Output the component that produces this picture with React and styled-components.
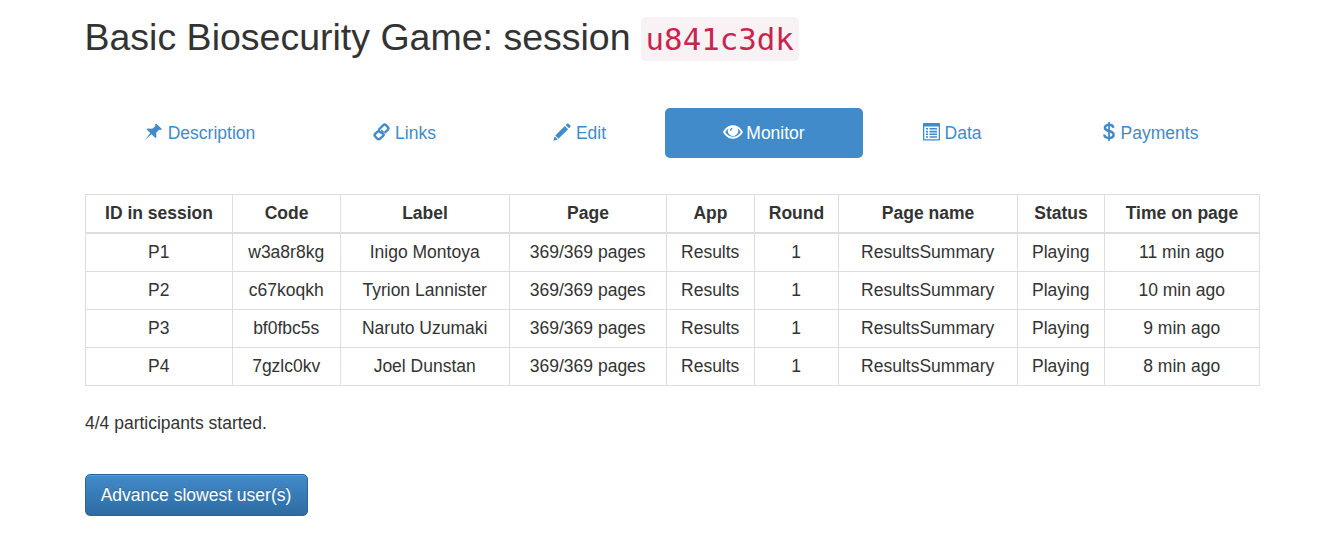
import React from "react";
import styled, { createGlobalStyle } from "styled-components";

const GlobalStyle = createGlobalStyle`
  *, *::before, *::after { box-sizing: border-box; }
  body {
    margin: 0;
    background: #fff;
    color: #333;
    font-family: "Liberation Sans", Arial, sans-serif;
    font-size: 17.5px;
    line-height: 25px;
  }
`;

const Page = styled.main`
  width: 1174px;
  margin-left: 85px;
  padding-top: 17px;
`;

const Title = styled.h2`
  display: flex;
  align-items: center;
  gap: 10px;
  height: 44px;
  margin: 0;
  font-size: 37.5px;
  font-weight: 500;
  line-height: 41px;
  white-space: nowrap;
`;

const TitleText = styled.span`
  height: 41px;
  margin-top: -4px;
  margin-left: -0.5px;
`;

const SessionCode = styled.code`
  height: 44px;
  padding: 0 5px;
  border-radius: 5px;
  background: #f9f2f4;
  color: #c7254e;
  font-family: "DejaVu Sans Mono", monospace;
  font-size: 30.8px;
  line-height: 45px;
`;

const Tabs = styled.nav`
  display: flex;
  margin-top: 47px;
`;

const Tab = styled.a`
  display: flex;
  align-items: center;
  justify-content: center;
  gap: ${({ $gap }) => $gap || 5}px;
  width: ${({ $width }) => $width}px;
  height: 50px;
  border-radius: 5px;
  color: ${({ $active }) => ($active ? "#fff" : "#428bca")};
  background: ${({ $active }) => ($active ? "#428bca" : "transparent")};
  text-decoration: none;
  white-space: nowrap;
`;

const Icon = styled.svg`
  flex: none;
  display: block;
  margin-top: -3px;
  overflow: visible;
`;

const Table = styled.table`
  width: 1175px;
  margin-top: 36px;
  table-layout: fixed;
  border-collapse: separate;
  border-spacing: 0;
  border-top: 1px solid #ddd;
  border-left: 1px solid #ddd;
  text-align: center;
`;

const Column = styled.col`
  width: ${({ $width }) => $width}px;
`;

const HeadCell = styled.th`
  height: 39px;
  padding: 0;
  border-right: 1px solid #ddd;
  border-bottom: 2px solid #ddd;
  font-weight: bold;
`;

const Cell = styled.td`
  height: 38px;
  padding: 0 0.6px 0 0;
  border-right: 1px solid #ddd;
  border-bottom: 1px solid #ddd;
`;

const Summary = styled.p`
  margin: 25px 0 38px;
`;

const PrimaryButton = styled.button`
  display: block;
  width: 223px;
  height: 42px;
  padding: 0 1px 0 0;
  border: 1px solid #2b669a;
  border-radius: 5px;
  background: linear-gradient(#428bca, #2d6ca2);
  box-shadow: inset 0 1px 0 rgba(255, 255, 255, 0.15), 0 1px 1px rgba(0, 0, 0, 0.075);
  color: #fff;
  font: inherit;
  text-shadow: 0 -1px 0 rgba(0, 0, 0, 0.2);
`;

const PinIcon = () => (
  <Icon width="18" height="18" viewBox="0.5 0 18 18" fill="currentColor">
    <path d="M11.6 0.4 17.4 6.1 16.2 7.1 14.7 6.7 11.7 9.8 11.9 14.2 11 15.1 6.9 11.2 0.6 16.9 5.8 10.1 2 6.2 2.9 5.4 7.8 5.8 10.9 2.9 10.6 1.4Z" />
  </Icon>
);

const LinkIcon = () => (
  <Icon width="17" height="18" viewBox="0 0 17 18" fill="none" stroke="currentColor" strokeWidth="2.4">
    <path d="M11.6 9.9 14.7 6.9Q16.1 5.5 14.8 4.1L13 2.2Q11.7 0.9 10.3 2.2L6.4 6Q5 7.4 6.4 8.7L10.2 10.6Q11.4 11.7 10.1 13L7.1 15.7Q5.7 17 4.3 15.7L2.2 13.5Q0.9 12.1 2.2 10.8L4.7 8.4" />
    <path d="M8 7.2 10.4 9.4" strokeWidth="1.8" />
  </Icon>
);

const PencilIcon = () => (
  <Icon width="18" height="18" viewBox="0 0 18 18" fill="currentColor">
    <path d="M14 0.8Q14.8 0 15.7 0.8L17.3 2.4Q18.1 3.2 17.3 4L16 5.3 12.7 2.1ZM11.8 3 15.1 6.2 5.5 15.8 2.3 12.5ZM1.7 13.3 4.8 16.4 0.3 17.8Z" />
  </Icon>
);

const EyeIcon = () => (
  <Icon width="20" height="14" viewBox="0 0 20 14">
    <path
      fill="currentColor"
      fillRule="evenodd"
      d="M0 7C2.2 3 5.7 0.3 10 0.3S17.8 3 20 7C17.8 11 14.3 13.7 10 13.7S2.2 11 0 7ZM2.2 7C4 9.9 6.8 11.8 10 11.8S16 9.9 17.8 7C16.9 5.4 15.7 4.1 14.3 3.2A5.1 5.1 0 1 1 5.7 3.2C4.3 4.1 3.1 5.4 2.2 7ZM9 2.8C7.6 3.2 6.8 4.4 7 5.8L8.1 5.9C8.2 4.9 8.7 4.2 9.6 3.8Z"
    />
  </Icon>
);

const ListIcon = () => (
  <Icon width="17" height="18" viewBox="0 0 17 18" fill="currentColor">
    <path
      fillRule="evenodd"
      d="M0.8 0H16.2Q17 0 17 0.8V16.7Q17 17.5 16.2 17.5H0.8Q0 17.5 0 16.7V0.8Q0 0 0.8 0ZM1.3 3.5V16.2H15.7V3.5Z"
    />
    <path d="M3 5H5V6.6H3ZM6.5 5H14V6.6H6.5ZM3 7.8H5V9.4H3ZM6.5 7.8H14V9.4H6.5ZM3 10.5H5V12.1H3ZM6.5 10.5H14V12.1H6.5ZM3 13.2H5V14.8H3ZM6.5 13.2H14V14.8H6.5Z" />
  </Icon>
);

const DollarIcon = () => (
  <Icon width="13" height="19" viewBox="-1 0 13 19" fill="none" stroke="currentColor">
    <path d="M10.4 5.7C10.1 3.8 8.4 2.8 6.1 2.8S1.9 3.9 1.9 5.8C1.9 7.9 3.8 8.4 6.1 9S10.6 10.5 10.6 12.8 8.7 16 6.1 16 1.5 14.7 1.3 12.5" strokeWidth="2.5" />
    <path d="M6 0V19" strokeWidth="1.8" />
  </Icon>
);

const tabs = [
  { label: "Description", width: 230, icon: PinIcon },
  { label: "Links", width: 179, icon: LinkIcon },
  { label: "Edit", width: 171, icon: PencilIcon },
  { label: "Monitor", width: 198, icon: EyeIcon, active: true, gap: 3 },
  { label: "Data", width: 178, icon: ListIcon },
  { label: "Payments", width: 218, icon: DollarIcon, gap: 6 },
];

const columns = [
  ["ID in session", 147],
  ["Code", 108],
  ["Label", 169],
  ["Page", 157],
  ["App", 88],
  ["Round", 84],
  ["Page name", 179],
  ["Status", 87],
  ["Time on page", 155],
];

const rows = [
  ["P1", "w3a8r8kg", "Inigo Montoya", "369/369 pages", "Results", "1", "ResultsSummary", "Playing", "11 min ago"],
  ["P2", "c67koqkh", "Tyrion Lannister", "369/369 pages", "Results", "1", "ResultsSummary", "Playing", "10 min ago"],
  ["P3", "bf0fbc5s", "Naruto Uzumaki", "369/369 pages", "Results", "1", "ResultsSummary", "Playing", "9 min ago"],
  ["P4", "7gzlc0kv", "Joel Dunstan", "369/369 pages", "Results", "1", "ResultsSummary", "Playing", "8 min ago"],
];

export default function App() {
  return (
    <>
      <GlobalStyle />
      <Page>
        <Title>
          <TitleText>Basic Biosecurity Game: session</TitleText>
          <SessionCode>u841c3dk</SessionCode>
        </Title>
        <Tabs>
          {tabs.map(({ label, width, icon: Glyph, active, gap }) => (
            <Tab key={label} $width={width} $active={active} $gap={gap}>
              <Glyph />
              <span>{label}</span>
            </Tab>
          ))}
        </Tabs>
        <Table>
          <colgroup>
            {columns.map(([name, width]) => (
              <Column key={name} $width={width} />
            ))}
          </colgroup>
          <thead>
            <tr>
              {columns.map(([name]) => (
                <HeadCell key={name}>{name}</HeadCell>
              ))}
            </tr>
          </thead>
          <tbody>
            {rows.map((row) => (
              <tr key={row[0]}>
                {row.map((value, i) => (
                  <Cell key={i}>{value}</Cell>
                ))}
              </tr>
            ))}
          </tbody>
        </Table>
        <Summary>4/4 participants started.</Summary>
        <PrimaryButton type="button">Advance slowest user(s)</PrimaryButton>
      </Page>
    </>
  );
}
